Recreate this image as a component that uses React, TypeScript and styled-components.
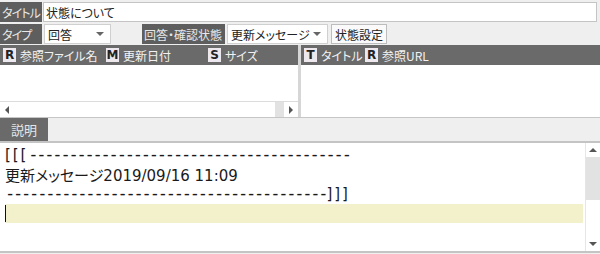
import React, { FC } from "react";
import styled, { createGlobalStyle } from "styled-components";

const GlobalStyle = createGlobalStyle`
  html, body {
    margin: 0;
    padding: 0;
    background: #efefef;
  }
`;

const Window = styled.div`
  width: 600px;
  height: 254px;
  display: flex;
  flex-direction: column;
  background: #efefef;
  font-family: "Noto Sans CJK JP", "DejaVu Sans", sans-serif;
  font-size: 12px;
  font-feature-settings: "palt";
  color: #222;
  overflow: hidden;
`;

const FormRow = styled.div`
  display: flex;
  align-items: stretch;
  height: 20px;
  margin-top: 2px;
  gap: 1px;
`;

const FieldLabel = styled.div<{ width?: number }>`
  width: ${p => p.width || 42}px;
  flex: none;
  background: #5e5e5e;
  color: #e8e8e8;
  display: flex;
  align-items: center;
  padding-left: 2px;
  box-sizing: border-box;
  white-space: nowrap;
  letter-spacing: ${p => (p.width ? "0" : "-0.9px")};
`;

const TextInput = styled.div`
  flex: 1;
  margin-right: 3px;
  background: #fff;
  border: 1px solid #c4c4c4;
  display: flex;
  align-items: center;
  padding-left: 2px;
`;

const Select = styled.div<{ width: number }>`
  width: ${p => p.width}px;
  flex: none;
  background: #fff;
  border: 1px solid #d0d0d0;
  box-sizing: border-box;
  display: flex;
  align-items: center;
  justify-content: space-between;
  padding: 0 6px 0 3px;
  margin-left: 1px;
  white-space: nowrap;
`;

const Caret = styled.span`
  width: 0;
  height: 0;
  border-left: 4px solid transparent;
  border-right: 4px solid transparent;
  border-top: 4px solid #666;
`;

const Spacer = styled.div<{ width: number }>`
  width: ${p => p.width}px;
  flex: none;
`;

const Button = styled.div`
  flex: none;
  background: #fafafa;
  border: 1px solid #bdbdbd;
  box-sizing: border-box;
  display: flex;
  align-items: center;
  padding: 0 3px;
  margin-left: 2px;
  white-space: nowrap;
`;

const Panes = styled.div`
  display: flex;
  height: 72px;
  margin-top: 1px;
  border-bottom: 1px solid #c6c6c6;
`;

const Pane = styled.div<{ width?: number }>`
  display: flex;
  flex-direction: column;
  background: #fff;
  ${p => (p.width ? `width: ${p.width}px; flex: none;` : "flex: 1;")}
`;

const Splitter = styled.div`
  width: 3px;
  flex: none;
  background: #d6d6d6;
`;

const ColumnHeader = styled.div`
  height: 20px;
  flex: none;
  background: #6a6a6a;
  display: flex;
  align-items: center;
  padding-left: 3px;
  color: #f2f2f2;
`;

const HeaderItem = styled.span<{ width?: number }>`
  display: flex;
  align-items: center;
  gap: 4px;
  flex: none;
  white-space: nowrap;
  ${p => (p.width ? `width: ${p.width}px;` : "margin-right: 3px;")}
`;

const Badge = styled.span`
  width: 13px;
  height: 14px;
  background: #ece8ee;
  color: #222;
  font-family: "DejaVu Sans", sans-serif;
  font-weight: bold;
  font-size: 12px;
  display: flex;
  align-items: center;
  justify-content: center;
  line-height: 1;
`;

const PaneBody = styled.div`
  flex: 1;
`;

const HScroll = styled.div`
  height: 15px;
  flex: none;
  border-top: 1px solid #dcdcdc;
  display: flex;
  align-items: center;
  background: #fff;
`;

const ScrollTrack = styled.div`
  flex: 1;
`;

const ScrollThumb = styled.div<{ w: number }>`
  width: ${p => p.w}px;
  align-self: stretch;
  background: #e2e2e2;
`;

const Arrow = styled.span<{ dir: "left" | "right" | "up" | "down" }>`
  width: 0;
  height: 0;
  margin: 0 5px;
  ${p =>
    p.dir === "left"
      ? "border-top:4px solid transparent;border-bottom:4px solid transparent;border-right:4px solid #555;"
      : p.dir === "right"
      ? "border-top:4px solid transparent;border-bottom:4px solid transparent;border-left:4px solid #555;"
      : p.dir === "up"
      ? "border-left:4px solid transparent;border-right:4px solid transparent;border-bottom:4px solid #555;"
      : "border-left:4px solid transparent;border-right:4px solid transparent;border-top:4px solid #555;"}
`;

const TabStrip = styled.div`
  height: 23px;
  flex: none;
  display: flex;
  border-bottom: 2px solid #c4c4c4;
`;

const Tab = styled.div`
  width: 48px;
  background: #6a6a6a;
  color: #e6e6e6;
  font-size: 13px;
  display: flex;
  align-items: center;
  padding-left: 11px;
  box-sizing: border-box;
`;

const Editor = styled.div`
  flex: 1;
  display: flex;
  background: #fff;
  border-bottom: 2px solid #c4c4c4;
  margin-bottom: 1px;
`;

const EditorText = styled.div`
  flex: 1;
  padding: 2px 2px 0 5px;
  font-family: "DejaVu Sans", "Noto Sans CJK JP", sans-serif;
  font-size: 15px;
  color: #1a1a1a;
`;

const Line = styled.div<{ active?: boolean }>`
  height: 19.5px;
  line-height: 19.5px;
  white-space: pre;
  background: ${p => (p.active ? "#f3f1cb" : "transparent")};
  position: relative;
`;

const Brackets = styled.span`
  letter-spacing: 1.9px;
`;

const Dashes = styled.span`
  font-family: "DejaVu Sans Mono", monospace;
  font-size: 17px;
  letter-spacing: -2.2px;
`;

const Jp = styled.span`
  font-family: "Noto Sans CJK JP", sans-serif;
`;

const Cursor = styled.span`
  position: absolute;
  left: 0;
  top: 1px;
  bottom: 1px;
  width: 1px;
  background: #111;
`;

const VScroll = styled.div`
  width: 14px;
  flex: none;
  display: flex;
  flex-direction: column;
  align-items: center;
  border-left: 1px solid #e6e6e6;
  padding: 5px 0 5px;
`;

const VThumb = styled.div`
  width: 100%;
  height: 43px;
  background: #e2e2e2;
  margin-top: 5px;
`;

const VTrack = styled.div`
  flex: 1;
`;

const dashes = "-".repeat(40);

const HeaderLabel: FC<{ letter: string; text: string; width?: number }> = ({ letter, text, width }) => (
  <HeaderItem width={width}>
    <Badge>{letter}</Badge>
    {text}
  </HeaderItem>
);

const App: FC = () => (
  <Window>
    <GlobalStyle />
    <FormRow>
      <FieldLabel>タイトル</FieldLabel>
      <TextInput>状態について</TextInput>
    </FormRow>
    <FormRow>
      <FieldLabel>タイプ</FieldLabel>
      <Select width={67}>
        回答
        <Caret />
      </Select>
      <Spacer width={29} />
      <FieldLabel width={83}>回答・確認状態</FieldLabel>
      <Select width={101}>
        更新メッセージ
        <Caret />
      </Select>
      <Button>状態設定</Button>
    </FormRow>
    <Panes>
      <Pane width={298}>
        <ColumnHeader>
          <HeaderLabel letter="R" text="参照ファイル名" width={103} />
          <HeaderLabel letter="M" text="更新日付" width={102} />
          <HeaderLabel letter="S" text="サイズ" />
        </ColumnHeader>
        <PaneBody />
        <HScroll>
          <Arrow dir="left" />
          <ScrollTrack />
          <ScrollThumb w={9} />
          <Arrow dir="right" />
        </HScroll>
      </Pane>
      <Splitter />
      <Pane>
        <ColumnHeader>
          <HeaderLabel letter="T" text="タイトル" width={61} />
          <HeaderLabel letter="R" text="参照URL" />
        </ColumnHeader>
        <PaneBody />
      </Pane>
    </Panes>
    <TabStrip>
      <Tab>説明</Tab>
    </TabStrip>
    <Editor>
      <EditorText>
        <Line>
          <Brackets>[[[</Brackets>
          <Dashes>{dashes}</Dashes>
        </Line>
        <Line>
          <Jp>更新メッセージ</Jp>2019/09/16 11:09
        </Line>
        <Line>
          <Dashes>{dashes}</Dashes>
          <Brackets>]]]</Brackets>
        </Line>
        <Line active>
          <Cursor />
        </Line>
      </EditorText>
      <VScroll>
        <Arrow dir="up" />
        <VThumb />
        <VTrack />
        <Arrow dir="down" />
      </VScroll>
    </Editor>
  </Window>
);

export default App;
